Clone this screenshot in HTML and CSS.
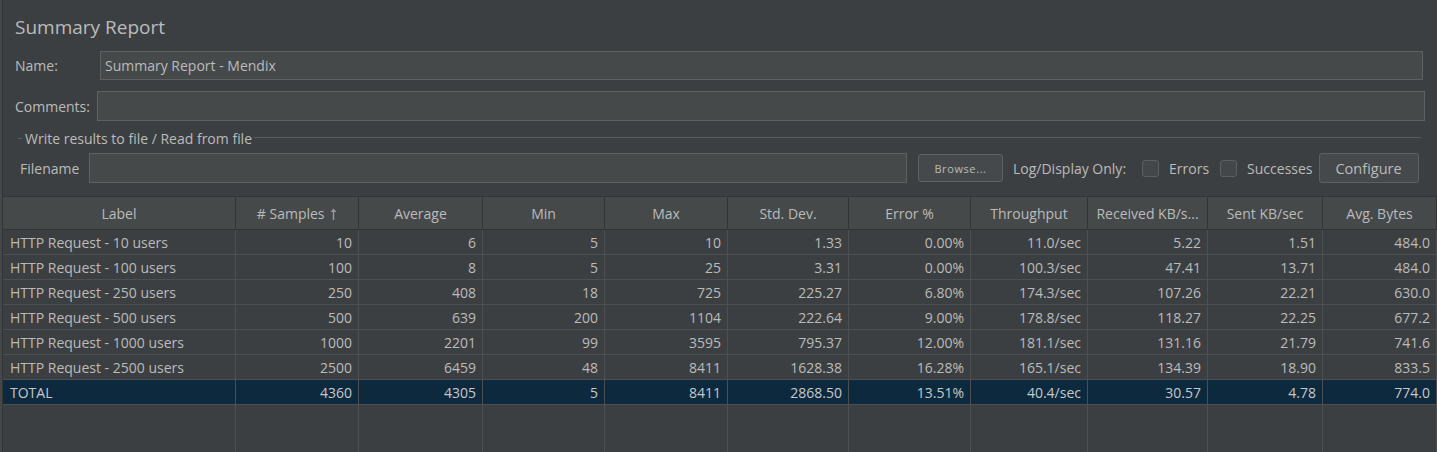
FILE: index.html
```html
<!DOCTYPE html>
<html>
<head>
<meta charset="utf-8">
<title>Summary Report</title>
<link rel="stylesheet" href="styles.css">
</head>
<body>
<div class="panel">
  <div class="form">
    <div class="title">Summary Report</div>
    <div class="row row-name">
      <span class="lbl lbl-name">Name:</span>
      <div class="input input-name">Summary Report - Mendix</div>
    </div>
    <div class="row row-comments">
      <span class="lbl lbl-comments">Comments:</span>
      <div class="input input-comments"></div>
    </div>
    <div class="fieldset">
      <div class="legend"><span class="tick"></span><span class="legend-text">Write results to file / Read from file</span><span class="rule"></span></div>
      <div class="row row-file">
        <span class="lbl lbl-file">Filename</span>
        <div class="input input-file"></div>
        <button class="btn btn-browse">Browse...</button>
        <span class="lbl lbl-log">Log/Display Only:</span>
        <span class="check check-1"></span><span class="lbl lbl-check">Errors</span>
        <span class="check check-2"></span><span class="lbl lbl-check">Successes</span>
        <button class="btn btn-config">Configure</button>
      </div>
    </div>
  </div>

  <div class="table">
    <div class="tr th">
      <div class="c">Label</div>
      <div class="c"># Samples <svg class="sort" width="7" height="12" viewBox="0 0 7 12"><path d="M3.5 0.5 L6.5 4 L4.2 4 L4.2 12 L2.8 12 L2.8 4 L0.5 4 Z" fill="#9a9a9a"/></svg></div>
      <div class="c">Average</div>
      <div class="c">Min</div>
      <div class="c">Max</div>
      <div class="c">Std. Dev.</div>
      <div class="c">Error %</div>
      <div class="c">Throughput</div>
      <div class="c">Received KB/s...</div>
      <div class="c">Sent KB/sec</div>
      <div class="c">Avg. Bytes</div>
    </div>
    <div class="tr">
      <div class="c l">HTTP Request - 10 users</div><div class="c">10</div><div class="c">6</div><div class="c">5</div><div class="c">10</div><div class="c">1.33</div><div class="c">0.00%</div><div class="c">11.0/sec</div><div class="c">5.22</div><div class="c">1.51</div><div class="c">484.0</div>
    </div>
    <div class="tr">
      <div class="c l">HTTP Request - 100 users</div><div class="c">100</div><div class="c">8</div><div class="c">5</div><div class="c">25</div><div class="c">3.31</div><div class="c">0.00%</div><div class="c">100.3/sec</div><div class="c">47.41</div><div class="c">13.71</div><div class="c">484.0</div>
    </div>
    <div class="tr">
      <div class="c l">HTTP Request - 250 users</div><div class="c">250</div><div class="c">408</div><div class="c">18</div><div class="c">725</div><div class="c">225.27</div><div class="c">6.80%</div><div class="c">174.3/sec</div><div class="c">107.26</div><div class="c">22.21</div><div class="c">630.0</div>
    </div>
    <div class="tr">
      <div class="c l">HTTP Request - 500 users</div><div class="c">500</div><div class="c">639</div><div class="c">200</div><div class="c">1104</div><div class="c">222.64</div><div class="c">9.00%</div><div class="c">178.8/sec</div><div class="c">118.27</div><div class="c">22.25</div><div class="c">677.2</div>
    </div>
    <div class="tr">
      <div class="c l">HTTP Request - 1000 users</div><div class="c">1000</div><div class="c">2201</div><div class="c">99</div><div class="c">3595</div><div class="c">795.37</div><div class="c">12.00%</div><div class="c">181.1/sec</div><div class="c">131.16</div><div class="c">21.79</div><div class="c">741.6</div>
    </div>
    <div class="tr">
      <div class="c l">HTTP Request - 2500 users</div><div class="c">2500</div><div class="c">6459</div><div class="c">48</div><div class="c">8411</div><div class="c">1628.38</div><div class="c">16.28%</div><div class="c">165.1/sec</div><div class="c">134.39</div><div class="c">18.90</div><div class="c">833.5</div>
    </div>
    <div class="tr total">
      <div class="c l">TOTAL</div><div class="c">4360</div><div class="c">4305</div><div class="c">5</div><div class="c">8411</div><div class="c">2868.50</div><div class="c">13.51%</div><div class="c">40.4/sec</div><div class="c">30.57</div><div class="c">4.78</div><div class="c">774.0</div>
    </div>
    <div class="tr filler">
      <div class="c"></div><div class="c"></div><div class="c"></div><div class="c"></div><div class="c"></div><div class="c"></div><div class="c"></div><div class="c"></div><div class="c"></div><div class="c"></div><div class="c"></div>
    </div>
  </div>
</div>
</body>
</html>
```

FILE: styles.css
```css
html, body {
  margin: 0;
  padding: 0;
  background: #3c3f41;
  overflow: hidden;
}
body {
  width: 1437px;
  height: 452px;
  font-family: "Open Sans", "Noto Sans", sans-serif;
  font-size: 14px;
  color: #bbbbbb;
}
.panel {
  height: 452px;
  border-left: 2px solid #45484a;
  box-shadow: inset 1px 0 0 #333537;
  box-sizing: border-box;
  padding-left: 1px;
}
.form {
  padding: 13px 0 0 12px;
  height: 183px;
}
.title {
  font-size: 19px;
  line-height: 28px;
  height: 28px;
}
.row {
  display: flex;
  align-items: center;
}
.lbl {
  white-space: nowrap;
}
.input {
  box-sizing: border-box;
  background: #45494a;
  border: 1px solid #5e6162;
  height: 29px;
  line-height: 27px;
  padding-left: 4px;
}
.row-name {
  margin-top: 10px;
}
.lbl-name {
  width: 85px;
}
.input-name {
  width: 1323px;
}
.row-comments {
  margin-top: 11px;
}
.lbl-comments {
  width: 82px;
}
.input-comments {
  width: 1328px;
  height: 30px;
}
.fieldset {
  margin-top: 7px;
  padding-left: 3px;
}
.legend {
  display: flex;
  align-items: center;
  height: 20px;
  margin-right: 16px;
}
.tick {
  width: 4px;
  height: 1px;
  background: #5a5d5f;
  margin-right: 3px;
}
.legend-text {
  white-space: nowrap;
}
.rule {
  flex: 1;
  height: 1px;
  background: #5a5d5f;
  margin-left: 2px;
  margin-bottom: 1px;
}
.row-file {
  margin-top: 5px;
  padding-left: 2px;
  height: 30px;
}
.lbl-file {
  width: 69px;
}
.input-file {
  width: 818px;
  height: 30px;
}
.btn {
  box-sizing: border-box;
  font-family: inherit;
  color: #bbbbbb;
  background: #46494b;
  border: 1px solid #5e6162;
  border-radius: 3px;
  padding: 0;
}
.btn-browse {
  margin-left: 11px;
  width: 85px;
  height: 28px;
  font-size: 11px;
  letter-spacing: 0.6px;
}
.lbl-log {
  margin-left: 10px;
}
.check {
  box-sizing: border-box;
  width: 17px;
  height: 17px;
  border: 1px solid #5c5f61;
  border-radius: 3px;
  background: #43474a;
  margin-right: 10px;
}
.check-1 {
  margin-left: 16px;
}
.check-2 {
  margin-left: 11px;
}
.btn-config {
  margin-left: 6px;
  width: 100px;
  height: 30px;
  font-size: 14.5px;
}

.table {
  border-top: 1px solid #323436;
}
.tr {
  display: grid;
  grid-template-columns: 233px 123px 124px 122px 123px 121px 122px 117px 120px 115px 1fr;
  height: 25px;
}
.c {
  box-sizing: border-box;
  border-right: 1px solid #4d5052;
  border-bottom: 1px solid #4d5052;
  text-align: right;
  padding: 0 6px 0 6px;
  line-height: 25px;
  white-space: nowrap;
  overflow: hidden;
}
.c.l {
  text-align: left;
  padding-left: 7px;
}
.th {
  height: 33px;
  background: #45494a;
}
.th .c {
  text-align: center;
  line-height: 33px;
  border-right: 1px solid #323436;
  border-bottom: 1px solid #323436;
}
.sort {
  vertical-align: -1px;
  margin-left: 2px;
}
.total {
  background: #0d293e;
}
.total .c {
  color: #c4c8cc;
}
.filler {
  height: 60px;
}
.filler .c {
  border-bottom: none;
}
```
